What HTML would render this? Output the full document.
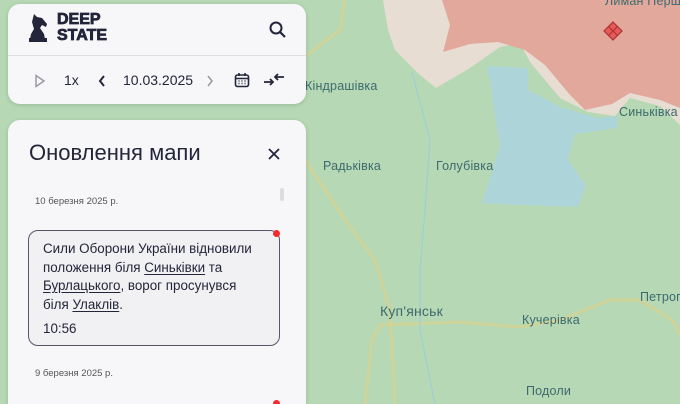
<!DOCTYPE html>
<html><head><meta charset="utf-8"><style>
*{box-sizing:border-box;margin:0;padding:0}
html,body{width:680px;height:404px;overflow:hidden}
body{position:relative;background:#b6d8b4;font-family:"Liberation Sans","DejaVu Sans",sans-serif}
.panel{position:absolute;background:#f7f7fa;border-radius:12px;box-shadow:0 1px 4px rgba(0,0,0,.15);overflow:hidden}
.lbl{position:absolute;font-size:12.5px;color:#3d6a6e;white-space:nowrap;letter-spacing:.2px}
u{text-decoration:underline;text-underline-offset:2px}
</style></head><body>
<svg width="680" height="404" style="position:absolute;left:0;top:0">
<path d="M383 0 L388 30 L395 50 L420 75 L436 88 L470 68 L500 47 L520 43 L530 62 L560 98 L588 112 L615 116 L630 98 L660 106 L680 125 L680 0Z" fill="#e8ddd2"/>
<path d="M442 0 L450 25 L443 52 L470 44 L498 42 L525 50 L545 65 L570 95 L585 110 L612 104 L630 93 L660 100 L680 108 L680 0Z" fill="#e3a89c"/>
<path d="M487 66 L528 68 L528 90 L560 107 L598 118 L618 116 L617 128 L575 134 L568 160 L586 185 L578 207 L520 205 L482 203 L490 178 L500 145 L494 110 L490 82Z" fill="#aad3df" opacity=".85"/>
<path d="M300 60 L340 30 L345 0 M305 160 L345 220 L375 260 L390 310 L395 404" stroke="#cfd49a" stroke-width="3" fill="none"/>
<path d="M380 325 L460 322 L520 327 L560 320 L610 300 L640 300 L672 320 L680 335 M380 325 L372 340 L365 404" stroke="#cfd49a" stroke-width="3" fill="none"/>
<path d="M412 72 L430 140 L425 210 L420 270 L420 330 L435 404" stroke="#9ecfd4" stroke-width="1.2" fill="none"/>
</svg>
<div class="lbl" style="left:305px;top:79px">Кіндрашівка</div>
<div class="lbl" style="left:323px;top:159px">Радьківка</div>
<div class="lbl" style="left:436px;top:159px">Голубівка</div>
<div class="lbl" style="left:619px;top:105px">Синьківка</div>
<div class="lbl" style="left:380px;top:303px;font-size:14px">Куп'янськ</div>
<div class="lbl" style="left:522px;top:313px">Кучерівка</div>
<div class="lbl" style="left:640px;top:290px">Петроп</div>
<div class="lbl" style="left:526px;top:384px">Подоли</div>
<div class="lbl" style="left:605px;top:-6px">Лиман Перш</div>
<svg width="20" height="20" style="position:absolute;left:603px;top:21px"><path d="M10 1 L19 10 L10 19 L1 10Z M5.5 5.5 L14.5 14.5 M14.5 5.5 L5.5 14.5" fill="#e85a5a" stroke="#a33" stroke-width="1.2"/></svg>

<div class="panel" style="left:8px;top:4px;width:298px;height:100px">
 <svg width="22" height="30" style="position:absolute;left:20px;top:8px" viewBox="0 0 22 30"><path d="M6 2 L9 5 L14 6 L19 12 L18 15 L14 13 L12 16 L16 22 L17 27 L2 27 L3 22 L6 17 L4 10 Z" fill="#23253a"/><rect x="1" y="26" width="18" height="4" fill="#23253a"/></svg>
 <div style="position:absolute;left:49px;top:8px;font-family:'Liberation Sans',sans-serif;font-weight:bold;font-size:16px;line-height:16px;color:#23253a;-webkit-text-stroke:0.8px #23253a">DEEP<br>STATE</div>
 <svg width="20" height="20" style="position:absolute;left:260px;top:16px"><circle cx="8" cy="8" r="5.5" stroke="#23253a" stroke-width="2" fill="none"/><path d="M12 12 L17 17" stroke="#23253a" stroke-width="2.2"/></svg>
 <div style="position:absolute;left:0;top:51px;width:100%;height:1px;background:#dedee3"></div>
 <svg width="12" height="14" style="position:absolute;left:26px;top:70px"><path d="M2 1.5 L10 7 L2 12.5Z" fill="none" stroke="#9a9aa3" stroke-width="1.5"/></svg>
 <div style="position:absolute;left:56px;top:68px;font-size:14px;color:#23253a">1x</div>
 <svg width="10" height="14" style="position:absolute;left:89px;top:70px"><path d="M7 2 L3 7 L7 12" fill="none" stroke="#23253a" stroke-width="2"/></svg>
 <div style="position:absolute;left:115px;top:68px;font-size:14px;color:#23253a">10.03.2025</div>
 <svg width="10" height="14" style="position:absolute;left:197px;top:70px"><path d="M3 2 L7 7 L3 12" fill="none" stroke="#9a9aa3" stroke-width="1.6"/></svg>
 <svg width="16" height="16" style="position:absolute;left:226px;top:68px"><rect x="1.5" y="3" width="13" height="11.5" rx="2" fill="none" stroke="#23253a" stroke-width="1.6"/><path d="M1.5 6.5 H14.5 M5 1 V4 M11 1 V4" stroke="#23253a" stroke-width="1.6"/><path d="M4.5 9h1M7.5 9h1M10.5 9h1M4.5 11.5h1M7.5 11.5h1M10.5 11.5h1" stroke="#23253a" stroke-width="1.4"/></svg>
 <svg width="22" height="16" style="position:absolute;left:255px;top:68px"><path d="M1 10 H10 M7 7 L10 10 L7 13 M21 5 H12 M15 2 L12 5 L15 8" fill="none" stroke="#23253a" stroke-width="1.8"/></svg>
</div>

<div class="panel" style="left:8px;top:120px;width:298px;height:284px;border-radius:12px 12px 0 0">
 <div style="position:absolute;left:21px;top:20px;font-size:22px;color:#23253a">Оновлення мапи</div>
 <svg width="14" height="14" style="position:absolute;left:259px;top:27px"><path d="M2 2 L12 12 M12 2 L2 12" stroke="#23253a" stroke-width="1.8"/></svg>
 <div style="position:absolute;left:272px;top:68px;width:4px;height:13px;border-radius:2px;background:#dcdce0"></div>
 <div style="position:absolute;left:27px;top:76px;font-size:9.5px;color:#555">10 березня 2025 р.</div>
 <div style="position:absolute;left:20px;top:110px;width:252px;height:116px;border:1.3px solid #55566a;border-radius:10px;background:#f1f1f3;padding:9px 22px 9px 14px;font-size:13.4px;line-height:18.5px;color:#23253a">Сили Оборони України відновили положення біля <u>Синьківки</u> та <u>Бурлацького</u>, ворог просунувся біля <u>Улаклів</u>.<div style="margin-top:6px">10:56</div></div>
 <div style="position:absolute;left:265px;top:110px;width:7px;height:7px;border-radius:50%;background:#f02c2c"></div>
 <div style="position:absolute;left:27px;top:248px;font-size:9.5px;color:#555">9 березня 2025 р.</div>
 <div style="position:absolute;left:265px;top:280px;width:7px;height:7px;border-radius:50%;background:#f02c2c"></div>
</div>
</body></html>
